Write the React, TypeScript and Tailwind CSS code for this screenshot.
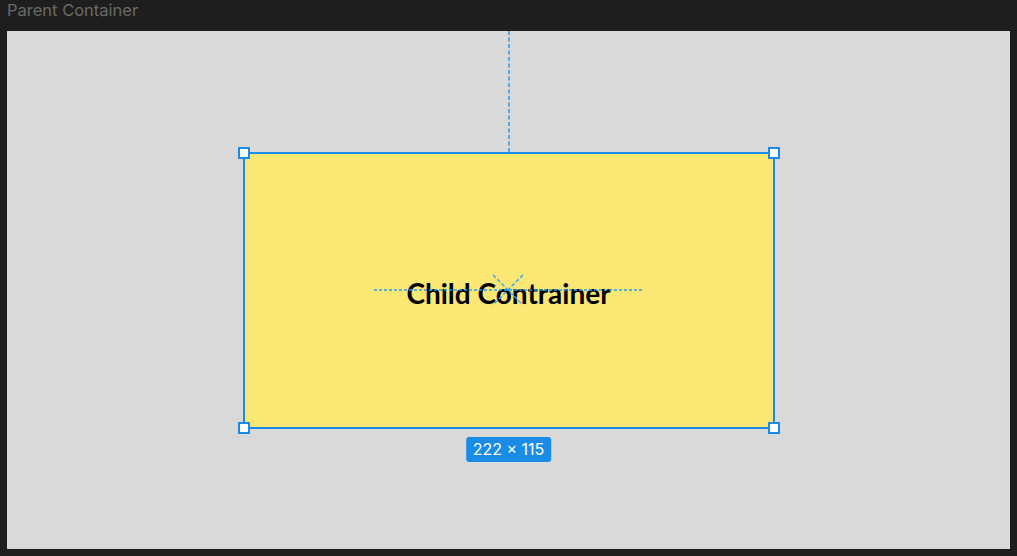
import React from 'react';

const Handle = ({ pos }: { pos: string }) => (
  <div className={`absolute w-[12px] h-[12px] bg-white border-2 border-[#1a8ce8] ${pos}`} />
);

const App = () => {
  return (
    <div className="w-[1017px] h-[556px] bg-[#1e1e1e] flex flex-col font-['Inter',sans-serif]">
      {/* Title */}
      <div className="h-[31px] pl-[7px] flex items-start pt-[1px] text-[16.5px] text-[#6a6a6a] leading-[19px]">
        Parent Container
      </div>

      {/* Canvas */}
      <div className="relative mx-[7px] h-[518px] bg-[#d9d9d9] flex items-center justify-center">
        {/* top guide */}
        <svg className="absolute top-0 left-1/2 -translate-x-[1.5px]" width="3" height="121" viewBox="0 0 3 121">
          <line x1="1.5" y1="0" x2="1.5" y2="121" stroke="#2b9cf0" strokeWidth="1.6" strokeDasharray="4 2.5" />
        </svg>

        <div className="relative w-[532px] h-[277px] bg-[#fbe774] border-2 border-[#1a8ce8] flex items-center justify-center">
          <span className="relative z-0 text-[28px] font-bold text-black font-['Lato',sans-serif] mt-[5px]">
            Child Contrainer
          </span>

          {/* center guides */}
          <svg className="absolute left-1/2 top-1/2 -translate-x-1/2 -translate-y-1/2 z-10" width="270" height="34" viewBox="0 0 270 34">
            <line x1="0" y1="17" x2="270" y2="17" stroke="#2b9cf0" strokeWidth="1.3" strokeDasharray="3 2" />
            <line x1="119" y1="2" x2="149" y2="32" stroke="#33a6ff" strokeWidth="1.4" strokeDasharray="4 2" />
            <line x1="149" y1="2" x2="119" y2="32" stroke="#33a6ff" strokeWidth="1.4" strokeDasharray="4 2" />
          </svg>

          <Handle pos="-top-[7px] -left-[7px]" />
          <Handle pos="-top-[7px] -right-[7px]" />
          <Handle pos="-bottom-[7px] -left-[7px]" />
          <Handle pos="-bottom-[7px] -right-[7px]" />

          {/* size badge */}
          <div className="absolute top-full mt-[10px] left-1/2 -translate-x-1/2 h-[25px] px-[7px] rounded-[3px] bg-[#1a8ce8] text-white text-[16px] leading-[25px] whitespace-nowrap">
            222 × 115
          </div>
        </div>
      </div>
    </div>
  );
};

export default App;
